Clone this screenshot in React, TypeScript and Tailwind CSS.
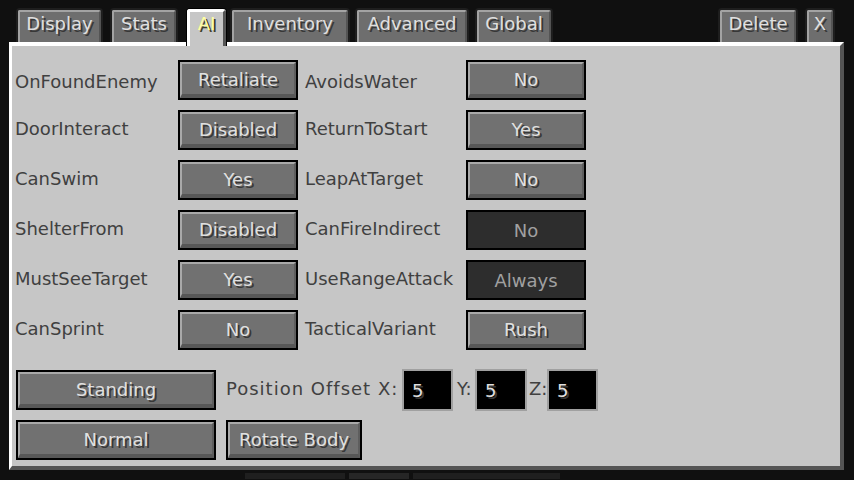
import React from 'react'

const font = { fontFamily: '"DejaVu Sans", "Liberation Sans", sans-serif' }

type Row = {
  left: string
  leftValue: string
  right: string
  rightValue: string
  rightDisabled?: boolean
}

const rows: Row[] = [
  { left: 'OnFoundEnemy', leftValue: 'Retaliate', right: 'AvoidsWater', rightValue: 'No' },
  { left: 'DoorInteract', leftValue: 'Disabled', right: 'ReturnToStart', rightValue: 'Yes' },
  { left: 'CanSwim', leftValue: 'Yes', right: 'LeapAtTarget', rightValue: 'No' },
  { left: 'ShelterFrom', leftValue: 'Disabled', right: 'CanFireIndirect', rightValue: 'No', rightDisabled: true },
  { left: 'MustSeeTarget', leftValue: 'Yes', right: 'UseRangeAttack', rightValue: 'Always', rightDisabled: true },
  { left: 'CanSprint', leftValue: 'No', right: 'TacticalVariant', rightValue: 'Rush' },
]

function McButton({ label, className = '', disabled = false }: { label: string, className?: string, disabled?: boolean }) {
  if (disabled) {
    return (
      <div className={`bg-black p-[2px] ${className}`}>
        <div className="flex h-full items-center justify-center bg-[#2d2d2d] text-[18px] text-[#a0a0a0]">
          {label}
        </div>
      </div>
    )
  }
  return (
    <div className={`bg-black p-[2px] ${className}`}>
      <div className="flex h-full items-center justify-center border-t-2 border-l-2 border-r-2 border-b-4 border-t-[#a9a9a9] border-l-[#a9a9a9] border-r-[#5e5e5e] border-b-[#575757] bg-[#717171] text-[18px] text-[#e0e0e0] [text-shadow:2px_2px_0_#383838]">
        {label}
      </div>
    </div>
  )
}

function Tab({ label, width, className = '' }: { label: string, width: string, className?: string }) {
  return (
    <div className={`h-[34px] rounded-t-[4px] bg-[#1e1e1e] px-[2px] pt-[2px] ${width} ${className}`}>
      <div className="flex h-full items-center justify-center rounded-t-[2px] border-t-2 border-l-2 border-r-2 border-t-[#a3a3a3] border-l-[#a3a3a3] border-r-[#545454] bg-[#6e6e6e] pb-[7px] text-[18px] text-[#e0e0e0] [text-shadow:2px_2px_0_#383838]">
        {label}
      </div>
    </div>
  )
}

function TextField({ value, width }: { value: string, width: string }) {
  return (
    <div className={`flex h-[42px] ${width} items-center border-2 border-[#a0a0a0] bg-black pl-[8px] text-[18px] text-[#e0e0e0] [text-shadow:2px_2px_0_#383838]`}>
      {value}
    </div>
  )
}

export default function App() {
  return (
    <div className="relative h-[480px] w-[854px] overflow-hidden bg-[#101010]" style={font}>
      {/* Tabs */}
      <div className="flex items-start pt-[8px] pl-[16px] pr-[19px]">
        <Tab label="Display" width="w-[87px]" />
        <Tab label="Stats" width="w-[68px]" className="ml-[7px]" />
        <div className="relative z-10 -mb-[4px] ml-[8px] h-[38px] w-[41px] rounded-t-[4px] bg-black px-[1px] pt-[1px]">
          <div className="flex h-full items-center justify-center rounded-t-[3px] border-t-[3px] border-l-[3px] border-r-[3px] border-t-white border-l-white border-r-[#555] bg-[#c6c6c6] pb-[11px] text-[18px] text-[#ffffa0] [text-shadow:2px_2px_0_#3f3f28]">
            AI
          </div>
        </div>
        <Tab label="Inventory" width="w-[120px]" className="ml-[3px]" />
        <Tab label="Advanced" width="w-[114px]" className="ml-[5px]" />
        <Tab label="Global" width="w-[78px]" className="ml-[6px]" />
        <Tab label="Delete" width="w-[80px]" className="ml-auto" />
        <Tab label="X" width="w-[30px]" className="ml-[7px]" />
      </div>

      {/* Panel */}
      <div className="ml-[9px] h-[428px] w-[835px] border-t-4 border-l-[3px] border-r-4 border-b-4 border-t-white border-l-white border-r-[#555] border-b-[#555] bg-[#c6c6c6] pt-[14px] pl-[3px] text-[18px]">
        <div className="flex flex-col gap-[10px]">
          {rows.map((row, i) => (
            <div key={row.left} className="flex h-[40px] items-center">
              <span className={`w-[163px] text-[#404040] ${i === 0 ? 'pt-[2px]' : 'pb-[4px]'}`}>{row.left}</span>
              <McButton label={row.leftValue} className="h-[40px] w-[120px]" />
              <span className={`ml-[7px] w-[161px] text-[#404040] ${i === 0 ? 'pt-[2px]' : 'pb-[4px]'}`}>{row.right}</span>
              <McButton label={row.rightValue} disabled={row.rightDisabled} className="h-[40px] w-[120px]" />
            </div>
          ))}
        </div>

        <div className="mt-[19px] ml-[1px] flex h-[42px] items-center">
          <McButton label="Standing" className="h-[40px] w-[200px]" />
          <span className="ml-[10px] w-[176px] pb-[4px] tracking-[1px] text-[#404040]">Position Offset X:</span>
          <TextField value="5" width="w-[51px]" />
          <span className="ml-[4px] w-[18px] pb-[4px] text-[#404040]">Y:</span>
          <TextField value="5" width="w-[52px]" />
          <span className="ml-[2px] w-[18px] pb-[4px] text-[#404040]">Z:</span>
          <TextField value="5" width="w-[51px]" />
        </div>

        <div className="mt-[9px] ml-[1px] flex items-center gap-[10px]">
          <McButton label="Normal" className="h-[40px] w-[200px]" />
          <McButton label="Rotate Body" className="h-[40px] w-[136px]" />
        </div>
      </div>

      {/* hotbar remnants behind the gui */}
      <div className="ml-[245px] mt-[3px] flex h-[6px] w-[315px] gap-[4px]">
        <div className="w-[100px] bg-[#1f1f1f]" />
        <div className="w-[60px] bg-[#262626]" />
        <div className="flex-1 bg-[#1f1f1f]" />
      </div>
    </div>
  )
}
